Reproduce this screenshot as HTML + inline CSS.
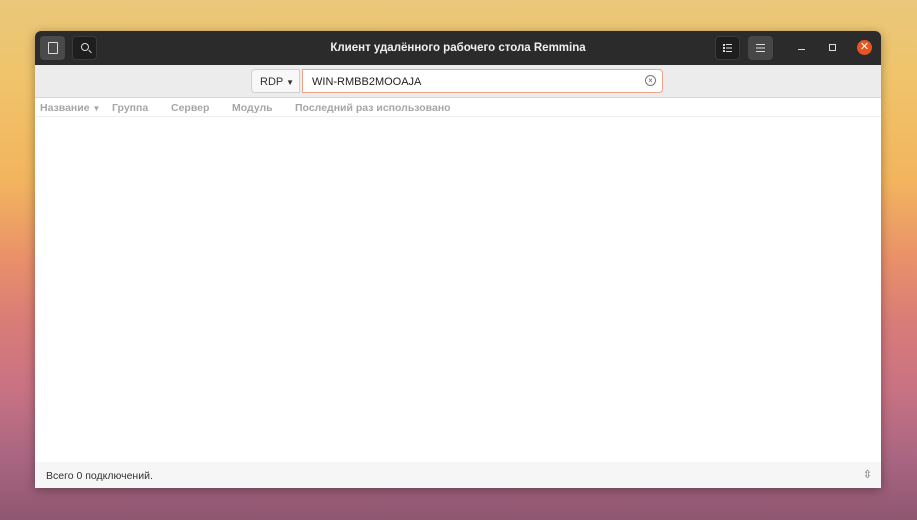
<!DOCTYPE html><html><head><meta charset="utf-8"><style>
*{margin:0;padding:0;box-sizing:border-box}
body{width:917px;height:520px;overflow:hidden;position:relative;font-family:"Liberation Sans","DejaVu Sans",sans-serif;
background:linear-gradient(180deg,#e9c77a 0%,#f0c46a 15%,#f2b45e 35%,#e9906a 50%,#d97c78 62%,#c87283 75%,#a96682 88%,#8f5670 100%)}
.win{position:absolute;left:35px;top:31px;width:846px;height:457px;background:#fff;border-radius:6px 6px 0 0;overflow:hidden;box-shadow:0 2px 10px rgba(0,0,0,.35)}
.tb{height:34px;background:#2b2b2b;position:relative;color:#fff}
.btn{position:absolute;top:5px;width:25px;height:24px;border-radius:4px}
.title{position:absolute;left:0;right:0;top:11px;text-align:center;font-size:11.5px;font-weight:bold;color:#f0f0f0}
.tool{height:33px;background:#ececec;border-bottom:1px solid #d6d6d6;position:relative}
.rdp{position:absolute;left:216px;top:4px;width:49px;height:24px;background:#f8f8f8;border:1px solid #d0d0d0;border-radius:4px 0 0 4px;font-size:11px;color:#333;padding:6px 0 0 8px}
.inp{position:absolute;left:267px;top:4px;width:361px;height:24px;background:#fff;border:1px solid #f0a58a;border-radius:0 4px 4px 0;font-size:11px;color:#222;padding:6px 0 0 9px}
.hdr{height:19px;border-bottom:1px solid #eee;font-size:10.5px;font-weight:bold;color:#a6a6a6;position:relative}
.hdr span{position:absolute;top:4px}
.st{position:absolute;left:0;right:0;bottom:0;height:26px;background:#f6f6f6;font-size:10.5px;color:#333;padding:8px 0 0 11px}
</style></head><body>
<div class="win">
 <div class="tb">
  <div class="btn" style="left:5px;background:#4a4a4a"><div style="position:absolute;left:8px;top:6px;width:10px;height:12px;border:1.3px solid #ddd;border-radius:1px"></div></div>
  <div class="btn" style="left:37px;background:#1e1e1e;border:1px solid #3a3a3a"><div style="position:absolute;left:8px;top:6px;width:8px;height:8px;border:1.3px solid #ddd;border-radius:50%"></div><div style="position:absolute;left:15px;top:14px;width:4px;height:1.3px;background:#ddd;transform:rotate(45deg)"></div></div>
  <div class="title">Клиент удалённого рабочего стола Remmina</div>
  <div class="btn" style="left:680px;background:#1e1e1e;border:1px solid #3a3a3a"><svg width="25" height="24" style="position:absolute;left:-1px;top:-1px"><g fill="#ddd"><rect x="8" y="8" width="2" height="2"/><rect x="8" y="11" width="2" height="2"/><rect x="8" y="14" width="2" height="2"/><rect x="11" y="8" width="6" height="1"/><rect x="11" y="11.5" width="6" height="1"/><rect x="11" y="15" width="6" height="1"/></g></svg></div>
  <div class="btn" style="left:713px;background:#474747"><svg width="25" height="24"><g fill="#ddd"><rect x="8" y="8" width="9" height="1"/><rect x="8" y="11.5" width="9" height="1"/><rect x="8" y="15" width="9" height="1"/></g></svg></div>
  <div style="position:absolute;left:763px;top:18px;width:7px;height:1px;background:#ddd"></div>
  <div style="position:absolute;left:794px;top:13px;width:7px;height:7px;border:1.3px solid #ddd"></div>
  <div style="position:absolute;left:822px;top:9px;width:15px;height:15px;border-radius:50%;background:#e95420;color:#fff;font-size:11px;text-align:center;line-height:15px">✕</div>
 </div>
 <div class="tool">
  <div class="rdp">RDP <span style="font-size:8px">▼</span></div>
  <div class="inp">WIN-RMBB2MOOAJA<span style="position:absolute;right:6px;top:5px;width:11px;height:11px;border:1px solid #777;border-radius:50%;font-size:8px;line-height:9px;text-align:center;color:#555">×</span></div>
 </div>
 <div class="hdr"><span style="left:5px">Название <span style="position:static;font-size:8px">▼</span></span><span style="left:77px">Группа</span><span style="left:136px">Сервер</span><span style="left:197px">Модуль</span><span style="left:260px">Последний раз использовано</span></div>
 <div class="st">Всего 0 подключений.<span style="position:absolute;right:9px;top:6px;color:#666;font-size:11px">⇳</span></div>
</div>
</body></html>
